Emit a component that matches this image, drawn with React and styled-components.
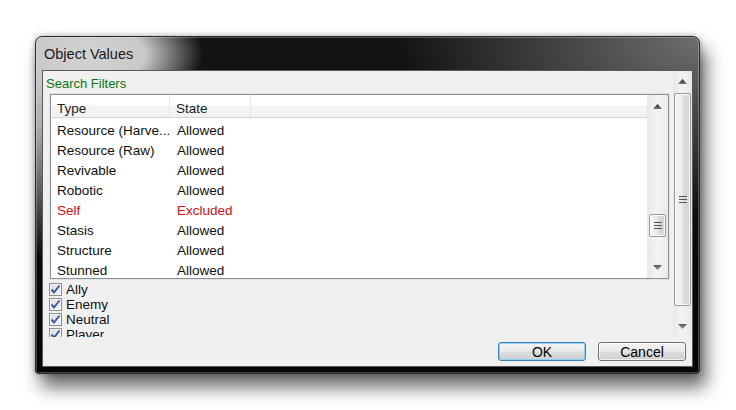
import React from 'react';
import styled, { createGlobalStyle } from 'styled-components';

const Global = createGlobalStyle`
  html, body { margin: 0; padding: 0; background: #ffffff; }
  body { font-family: "Liberation Sans", Arial, sans-serif; }
  * { box-sizing: border-box; }
`;

const Page = styled.div`
  width: 736px;
  height: 410px;
  padding: 36px 0 0 35px;
  overflow: hidden;
`;

const Window = styled.div`
  width: 665px;
  height: 338px;
  display: flex;
  flex-direction: column;
  padding: 0 6px 6px 6px;
  border: 1px solid #2a2a2a;
  border-radius: 7px 7px 3px 3px;
  background:
    radial-gradient(ellipse 115px 60px at 52px 18px, #d4d4d4 0%, #c8c8c8 50%, rgba(0,0,0,0) 100%),
    radial-gradient(ellipse 60px 220px at 0% 0%, #c8c8c8 0%, #b0b0b0 40%, rgba(0,0,0,0) 100%),
    radial-gradient(ellipse 300px 180px at 100% 0%, #6e6e6e 0%, #4a4a4a 40%, rgba(0,0,0,0) 100%),
    linear-gradient(to bottom, #141414, #050505);
  box-shadow: 6px 13px 18px rgba(0,0,0,0.6), 0 0 6px rgba(0,0,0,0.3),
    inset 0 0 0 1px rgba(255,255,255,0.25);
`;

const TitleBar = styled.div`
  height: 33px;
  display: flex;
  align-items: center;
  padding-left: 2px;
`;

const Title = styled.span`
  font-size: 14.5px;
  color: #1a1a1a;
`;

const Client = styled.div`
  flex: 1;
  display: flex;
  flex-direction: column;
  border: 1px solid #555a60;
  background: #f0f0f0;
`;

const ScrollPanel = styled.div`
  height: 266px;
  display: flex;
`;

const PanelContent = styled.div`
  flex: 1;
  display: flex;
  flex-direction: column;
  overflow: hidden;
  padding: 4px 4px 0 3px;
`;

const GroupLabel = styled.div`
  font-size: 13px;
  line-height: 16px;
  padding-top: 1px;
  color: #0b750b;
`;

const ListBox = styled.div`
  margin: 2px 0 0 4px;
  height: 187px;
  display: flex;
  border: 1px solid #8c9097;
  background: #ffffff;
  box-shadow: 0 0 0 1px #e2e2e2;
`;

const ListBody = styled.div`
  flex: 1;
  display: flex;
  flex-direction: column;
  overflow: hidden;
`;

const HeaderRow = styled.div`
  height: 23px;
  flex: none;
  display: flex;
  border-bottom: 1px solid #d5d5d5;
  background: linear-gradient(to bottom, #ffffff 0%, #ffffff 45%, #f3f4f6 50%, #f1f2f4 100%);
`;

const HeaderCell = styled.div`
  width: ${p => p.$w ? `${p.$w}px` : 'auto'};
  flex: ${p => p.$w ? 'none' : '1'};
  display: flex;
  align-items: center;
  padding: 5px 0 0 6px;
  font-size: 13.5px;
  color: #1e1e1e;
  border-right: ${p => p.$w ? '1px solid #e3e5e8' : 'none'};
`;

const Row = styled.div`
  height: 20px;
  flex: none;
  display: flex;
  align-items: center;
  padding-top: 5px;
  font-size: 13.5px;
  color: ${p => p.$excluded ? '#cf1020' : '#101010'};
  &:first-of-type { margin-top: 1px; }
`;

const Cell = styled.div`
  width: ${p => p.$w}px;
  padding-left: 6px;
  white-space: nowrap;
  overflow: hidden;
`;

const ScrollBar = styled.div`
  width: ${p => p.$w}px;
  display: flex;
  flex-direction: column;
  align-items: center;
  background: linear-gradient(to right, #e8e8e8, #f2f2f2 40%, #f2f2f2 60%, #e8e8e8);
`;

const ArrowBtn = styled.div`
  height: ${p => p.$h}px;
  width: 100%;
  display: flex;
  align-items: center;
  justify-content: center;
`;

const Thumb = styled.div`
  width: 17px;
  height: ${p => p.$h}px;
  margin-top: ${p => p.$mt}px;
  border: 1px solid #9b9b9b;
  border-radius: 2px;
  background: linear-gradient(to right, #f4f4f4 0%, #ececec 45%, #dcdcdc 55%, #d4d4d4 100%);
  box-shadow: inset 0 0 0 1px rgba(255,255,255,0.8);
  display: flex;
  align-items: center;
  justify-content: center;
`;

const Spacer = styled.div`
  flex: 1;
`;

const Checks = styled.div`
  margin: 3px 0 0 3px;
  display: flex;
  flex-direction: column;
`;

const CheckRow = styled.label`
  height: 15px;
  flex: none;
  display: flex;
  align-items: center;
  gap: 4px;
  font-size: 13.5px;
  color: #101010;
`;

const Box = styled.span`
  width: 13px;
  height: 13px;
  border: 1px solid #8f8f8f;
  background: linear-gradient(135deg, #dcdcdc, #f6f6f6);
  box-shadow: inset 0 0 0 1px #f4f4f4;
  display: flex;
  align-items: center;
  justify-content: center;
`;

const ButtonRow = styled.div`
  flex: 1;
  display: flex;
  align-items: center;
  justify-content: flex-end;
  gap: 12px;
  padding: 0 6px 0 0;
`;

const Button = styled.button`
  width: 88px;
  height: 19px;
  padding: 0;
  font-family: "Liberation Sans", Arial, sans-serif;
  font-size: 14px;
  line-height: 16px;
  color: #000;
  border: 1px solid ${p => p.$default ? '#3c7fb1' : '#707070'};
  border-radius: 3px;
  background: linear-gradient(to bottom, #f2f2f2 0%, #ebebeb 49%, #dddddd 51%, #cfcfcf 100%);
  box-shadow: inset 0 0 0 1px ${p => p.$default ? '#8cd3f5' : 'rgba(255,255,255,0.7)'};
`;

const UpArrow = () => (
  <svg width="9" height="5" viewBox="0 0 9 5">
    <defs>
      <linearGradient id="ua" x1="0" y1="0" x2="0" y2="1">
        <stop offset="0" stopColor="#222" />
        <stop offset="1" stopColor="#777" />
      </linearGradient>
    </defs>
    <polygon points="4.5,0 9,5 0,5" fill="url(#ua)" />
  </svg>
);

const DownArrow = () => (
  <svg width="9" height="5" viewBox="0 0 9 5">
    <defs>
      <linearGradient id="da" x1="0" y1="0" x2="0" y2="1">
        <stop offset="0" stopColor="#555" />
        <stop offset="1" stopColor="#9a9a9a" />
      </linearGradient>
    </defs>
    <polygon points="0,0 9,0 4.5,5" fill="url(#da)" />
  </svg>
);

const Grip = () => (
  <svg width="8" height="8" viewBox="0 0 8 8">
    {[0.5, 3.5, 6.5].map(y => (
      <line key={y} x1="0" y1={y} x2="8" y2={y} stroke="#555" strokeWidth="1" />
    ))}
  </svg>
);

const Check = () => (
  <svg width="11" height="11" viewBox="0 0 11 11">
    <path d="M1.5 5.5 L4 8.5 L9.5 1.5" fill="none" stroke="#3f5aa0" strokeWidth="2" />
  </svg>
);

const rows = [
  ['Resource (Harve...', 'Allowed'],
  ['Resource (Raw)', 'Allowed'],
  ['Revivable', 'Allowed'],
  ['Robotic', 'Allowed'],
  ['Self', 'Excluded'],
  ['Stasis', 'Allowed'],
  ['Structure', 'Allowed'],
  ['Stunned', 'Allowed'],
];

const checks = ['Ally', 'Enemy', 'Neutral', 'Player'];

export default function App() {
  return (
    <Page>
      <Global />
      <Window>
        <TitleBar>
          <Title>Object Values</Title>
        </TitleBar>
        <Client>
          <ScrollPanel>
            <PanelContent>
              <GroupLabel>Search Filters</GroupLabel>
              <ListBox>
                <ListBody>
                  <HeaderRow>
                    <HeaderCell $w={119}>Type</HeaderCell>
                    <HeaderCell $w={81}>State</HeaderCell>
                    <HeaderCell />
                  </HeaderRow>
                  {rows.map(([t, s]) => (
                    <Row key={t} $excluded={s === 'Excluded'}>
                      <Cell $w={120}>{t}</Cell>
                      <Cell $w={120}>{s}</Cell>
                    </Row>
                  ))}
                </ListBody>
                <ScrollBar $w={21}>
                  <ArrowBtn $h={22}><UpArrow /></ArrowBtn>
                  <Thumb $h={23} $mt={97}><Grip /></Thumb>
                  <Spacer />
                  <ArrowBtn $h={22}><DownArrow /></ArrowBtn>
                </ScrollBar>
              </ListBox>
              <Checks>
                {checks.map(c => (
                  <CheckRow key={c}>
                    <Box><Check /></Box>
                    {c}
                  </CheckRow>
                ))}
              </Checks>
            </PanelContent>
            <ScrollBar $w={19}>
              <ArrowBtn $h={21}><UpArrow /></ArrowBtn>
              <Thumb $h={213} $mt={1}><Grip /></Thumb>
              <Spacer />
              <ArrowBtn $h={22}><DownArrow /></ArrowBtn>
            </ScrollBar>
          </ScrollPanel>
          <ButtonRow>
            <Button $default>OK</Button>
            <Button>Cancel</Button>
          </ButtonRow>
        </Client>
      </Window>
    </Page>
  );
}
